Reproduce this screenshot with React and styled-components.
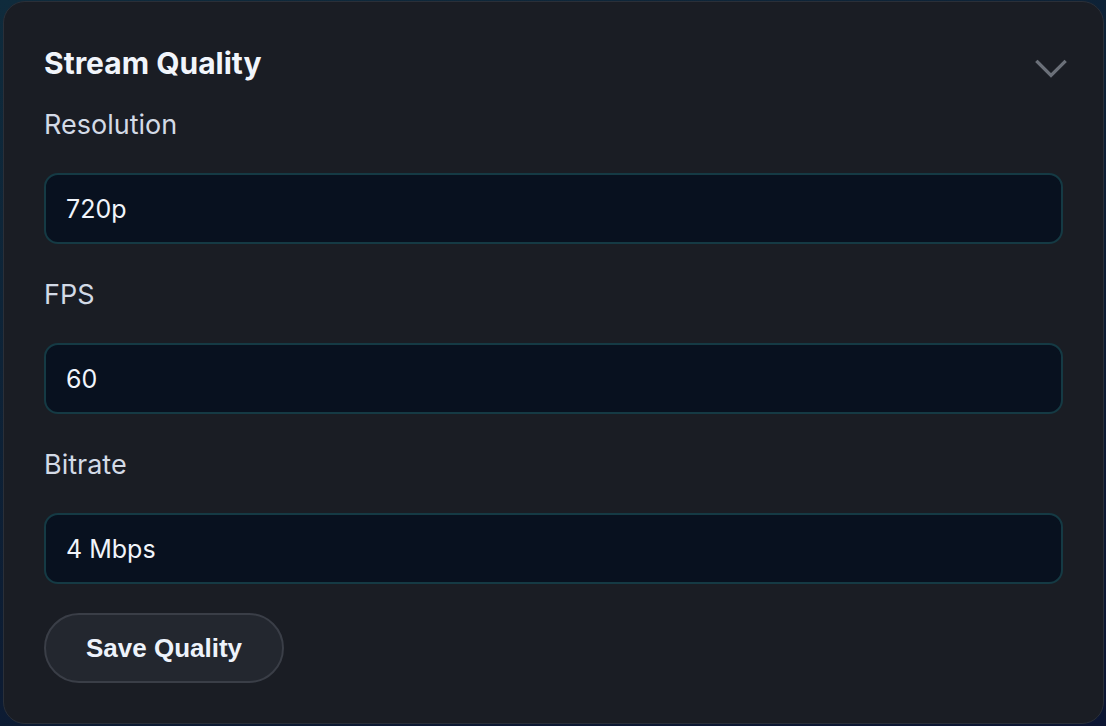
import React from 'react'
import styled, { createGlobalStyle } from 'styled-components'

const GlobalStyle = createGlobalStyle`
  html, body {
    margin: 0;
    padding: 0;
    height: 100%;
  }
  body {
    background: linear-gradient(160deg, #0f2b3c 0%, #0d1c33 60%, #0c1633 100%);
    font-family: Inter, "Noto Sans", sans-serif;
    -webkit-font-smoothing: antialiased;
  }
  #root {
    height: 100%;
  }
`

const Page = styled.div`
  height: 726px;
  box-sizing: border-box;
  padding: 1px 2px 2px 3px;
  display: flex;
`

const Card = styled.section`
  flex: 1;
  box-sizing: border-box;
  background: #1a1d24;
  border: 1px solid #2a2f38;
  border-radius: 22px;
  padding: 43px 40px 0 40px;
  display: flex;
  flex-direction: column;
`

const Header = styled.div`
  display: flex;
  align-items: center;
  justify-content: space-between;
  height: 36px;
`

const Title = styled.h2`
  margin: 0;
  font-size: 30px;
  font-weight: 700;
  color: #f1f5fb;
  letter-spacing: 0;
`

const Chevron = styled.svg`
  width: 36px;
  height: 36px;
  margin-right: -6px;
  margin-top: 10px;
  color: #6b7079;
`

const Field = styled.div`
  display: flex;
  flex-direction: column;
  margin-top: ${(p) => p.$gap}px;
`

const Label = styled.label`
  font-size: 27px;
  line-height: 32px;
  color: #d3dae6;
  margin-bottom: 32px;
`

const Input = styled.div`
  height: 71px;
  box-sizing: border-box;
  background: #08111f;
  border: 2px solid #153a44;
  border-radius: 14px;
  padding: 0 20px;
  display: flex;
  align-items: center;
  font-size: 25px;
  color: #f1f5fb;
`

const SaveButton = styled.button`
  align-self: flex-start;
  margin-top: 29px;
  height: 70px;
  padding: 0 40px;
  border-radius: 35px;
  background: #23272f;
  border: 2px solid #3a3e47;
  color: #eef3fb;
  font-family: "Liberation Sans", Arial, sans-serif;
  font-weight: 700;
  font-size: 26px;
  cursor: pointer;
`

const fields = [
  { label: 'Resolution', value: '720p', gap: 28 },
  { label: 'FPS', value: '60', gap: 35 },
  { label: 'Bitrate', value: '4 Mbps', gap: 35 },
]

export default function App() {
  return (
    <>
      <GlobalStyle />
      <Page>
        <Card>
          <Header>
            <Title>Stream Quality</Title>
            <Chevron viewBox="0 0 24 24" fill="none" stroke="currentColor" strokeWidth="2.2" strokeLinecap="square">
              <path d="M3 8l9 9 9-9" />
            </Chevron>
          </Header>
          {fields.map((f) => (
            <Field key={f.label} $gap={f.gap}>
              <Label>{f.label}</Label>
              <Input>{f.value}</Input>
            </Field>
          ))}
          <SaveButton>Save Quality</SaveButton>
        </Card>
      </Page>
    </>
  )
}
